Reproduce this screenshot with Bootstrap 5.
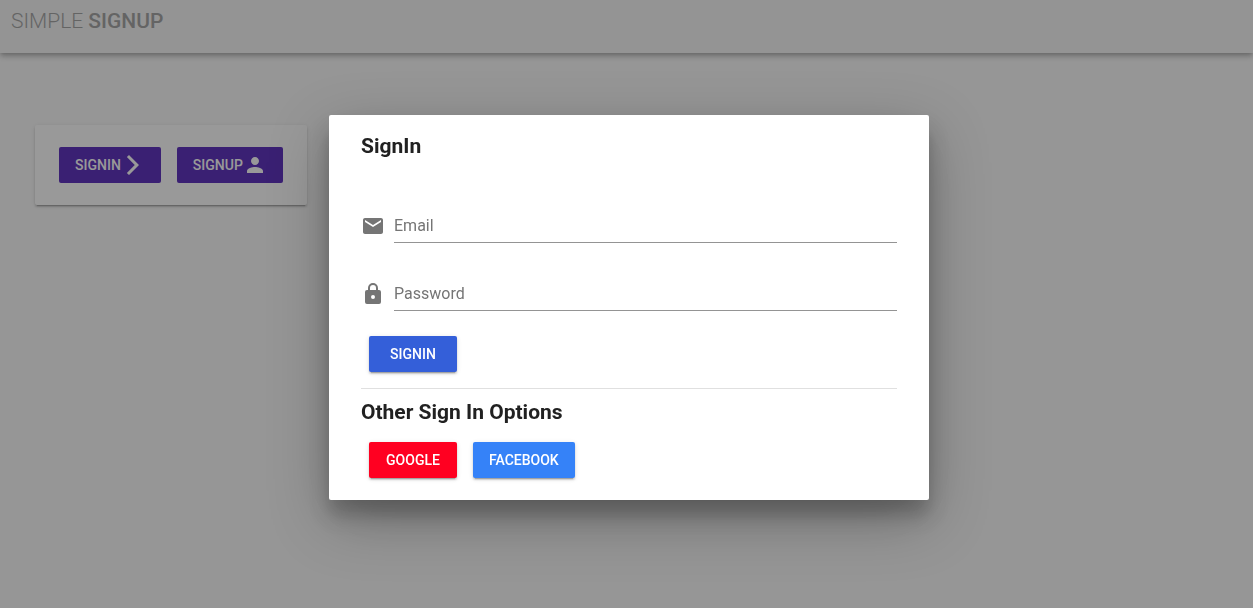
<!DOCTYPE html>
<html lang="en">
<head>
<meta charset="utf-8">
<meta name="viewport" content="width=device-width, initial-scale=1">
<title>Simple Signup</title>
<link href="https://cdn.jsdelivr.net/npm/bootstrap@5.3.0/dist/css/bootstrap.min.css" rel="stylesheet">
<style>
body { font-family: Roboto, "Liberation Sans", sans-serif; background: #fafafa; color: #212121; }
svg { display: block; fill: currentColor; }
.app-bar { background: #f5f5f5; height: 53px; padding: 6px 11px; box-shadow: 0 2px 4px -1px rgba(0,0,0,.2), 0 4px 5px rgba(0,0,0,.14), 0 1px 10px rgba(0,0,0,.12); }
.app-title { font-size: 21px; line-height: 30px; color: #9e9e9e; font-weight: 300; }
.app-title strong { font-weight: 500; }
.raised { box-shadow: 0 3px 1px -2px rgba(0,0,0,.2), 0 2px 2px rgba(0,0,0,.14), 0 1px 5px rgba(0,0,0,.12); }
.launcher { margin: 72px 35px; padding: 22px 24px; border: 0; border-radius: 2px; width: fit-content; }
.action { height: 36px; padding: 0 16px; border: 0; border-radius: 2px; font-size: 14px; font-weight: 500; min-width: 88px; color: #fff; }
.action:hover { color: #fff; opacity: .9; }
.violet { background: #5121b9 !important; }
.royal { background: #345fd9 !important; }
.red { background: #ff0021 !important; }
.azure { background: #3582f8 !important; }
.shade { --bs-backdrop-bg: #212121; --bs-backdrop-opacity: .46; }
.modal { padding: 7px 0 0 5px; }
.modal .modal-dialog { max-width: 600px; min-height: 100%; margin: 0 auto; }
.panel { border: 0; border-radius: 2px; padding: 16px 32px 22px; box-shadow: 0 19px 60px rgba(0,0,0,.3), 0 15px 20px rgba(0,0,0,.22); }
.panel h2 { font-size: 21px; line-height: 30px; font-weight: 700; margin: 0; }
.fields { padding-top: 48px; }
.entry { height: 34px; margin-bottom: 34px; }
.entry + .entry { margin-bottom: 25px; }
.entry label { width: 33px; color: #757575; flex: none; }
.entry input { height: 34px; padding: 0; border: 0; border-bottom: 1px solid #949494; border-radius: 0; background: none; font-size: 16px; }
.entry input::placeholder { color: #757575; }
.entry input:focus { box-shadow: none; border-color: #345fd9; }
.rule { margin: 16px 0 8px; border-top: 1px solid rgba(0,0,0,.12); opacity: 1; }
.providers { padding: 15px 8px 0; }
</style>
<script src="https://cdn.jsdelivr.net/npm/bootstrap@5.3.0/dist/js/bootstrap.bundle.min.js" defer></script>
</head>
<body>
<header class="app-bar">
  <h1 class="app-title m-0">SIMPLE <strong>SIGNUP</strong></h1>
</header>
<main>
  <div class="card launcher raised d-flex flex-row gap-3">
    <button type="button" class="btn action violet d-flex align-items-center">SIGNIN
      <svg width="24" height="24" viewBox="0 0 24 24" aria-hidden="true"><path d="M5.88 4.12 13.76 12l-7.88 7.88L8 22l10-10L8 2z"/></svg>
    </button>
    <button type="button" class="btn action violet d-flex align-items-center">SIGNUP
      <svg width="24" height="24" viewBox="0 0 24 24" aria-hidden="true"><path d="M12 12c2.21 0 4-1.79 4-4s-1.79-4-4-4-4 1.79-4 4 1.79 4 4 4zm0 2c-2.67 0-8 1.34-8 4v2h16v-2c0-2.66-5.33-4-8-4z"/></svg>
    </button>
  </div>
</main>
<div class="modal-backdrop shade show"></div>
<div class="modal show d-block" tabindex="-1" role="dialog" aria-modal="true" aria-labelledby="signin-title">
  <div class="modal-dialog modal-dialog-centered">
    <div class="modal-content panel">
      <h2 id="signin-title">SignIn</h2>
      <form class="fields">
        <div class="entry d-flex align-items-center">
          <label for="email" aria-label="Email"><svg width="24" height="24" viewBox="0 0 24 24"><path d="M20 4H4c-1.1 0-1.99.9-1.99 2L2 18c0 1.100.9 2 2 2h16c1.100 0 2-.9 2-2V6c0-1.100-.9-2-2-2zm0 4l-8 5-8-5V6l8 5 8-5v2z"/></svg></label>
          <input id="email" type="email" class="form-control" placeholder="Email">
        </div>
        <div class="entry d-flex align-items-center">
          <label for="password" aria-label="Password"><svg width="24" height="24" viewBox="0 0 24 24"><path d="M12 17a2 2 0 0 0 2-2 2 2 0 0 0-2-2 2 2 0 0 0-2 2 2 2 0 0 0 2 2m6-9a2 2 0 0 1 2 2v10a2 2 0 0 1-2 2H6a2 2 0 0 1-2-2V10a2 2 0 0 1 2-2h1V6a5 5 0 0 1 5-5 5 5 0 0 1 5 5v2h1m-6-5a3 3 0 0 0-3 3v2h6V6a3 3 0 0 0-3-3z"/></svg></label>
          <input id="password" type="password" class="form-control" placeholder="Password">
        </div>
        <button type="submit" class="btn action royal raised ms-2 d-block">SIGNIN</button>
      </form>
      <hr class="rule">
      <h2>Other Sign In Options</h2>
      <div class="providers d-flex gap-3">
        <button type="button" class="btn action red raised">GOOGLE</button>
        <button type="button" class="btn action azure raised">FACEBOOK</button>
      </div>
    </div>
  </div>
</div>
</body>
</html>
